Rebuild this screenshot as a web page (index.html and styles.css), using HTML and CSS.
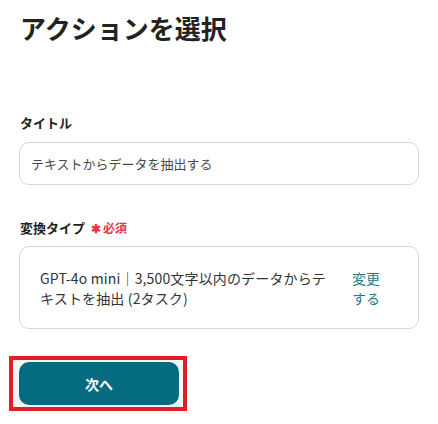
FILE: index.html
```html
<!DOCTYPE html>
<html lang="ja">
<head>
<meta charset="utf-8">
<link rel="stylesheet" href="styles.css">
</head>
<body>
<div class="page">
  <h1 class="title">アクションを選択</h1>
  <div class="field field-title">
    <div class="label">タイトル</div>
    <div class="input">テキストからデータを抽出する</div>
  </div>
  <div class="field field-type">
    <div class="label">変換タイプ<span class="req"><span class="star">✱</span>必須</span></div>
    <div class="select-box">
      <div class="select-text">GPT-4o mini｜3,500文字以内のデータからテキストを抽出 (2タスク)</div>
      <div class="change">変更する</div>
    </div>
  </div>
  <div class="actions">
    <div class="highlight">
      <button class="btn">次へ</button>
    </div>
  </div>
</div>
</body>
</html>
```

FILE: styles.css
```css
* { box-sizing: border-box; }
html, body { margin: 0; padding: 0; background: #ffffff; }
body {
  font-family: "Noto Sans CJK JP", "Noto Sans", sans-serif;
  color: #333333;
  width: 438px;
  height: 424px;
  overflow: hidden;
}
.page {
  padding: 8px 19px 0 19px;
}
.title {
  margin: 0 0 0 1px;
  font-size: 26px;
  line-height: 39px;
  font-weight: 700;
  color: #222222;
}
.field-title { margin-top: 67px; }
.label {
  font-size: 13px;
  font-weight: 700;
  line-height: 18px;
  color: #222222;
  padding-left: 1px;
  display: flex;
  align-items: center;
}
.input {
  margin-top: 10px;
  height: 43px;
  border: 1px solid #d3d7dd;
  border-radius: 10px;
  padding: 0 11px;
  display: flex;
  align-items: center;
  font-size: 13px;
  color: #4a4a4a;
}
.field-type { margin-top: 34px; }
.req {
  color: #e8334a;
  font-size: 12px;
  font-weight: 700;
  margin-left: 6px;
  display: inline-flex;
  align-items: center;
}
.star { font-size: 12px; margin-right: 2px; }
.select-box {
  margin-top: 9px;
  height: 83px;
  border: 1px solid #d3d7dd;
  border-radius: 10px;
  padding: 0 0 0 20px;
  display: flex;
  align-items: center;
  gap: 16px;
}
.select-text {
  flex: 0 0 296px;
  font-size: 14px;
  line-height: 20px;
  letter-spacing: 0.15px;
  color: #333333;
}
.change {
  font-size: 14px;
  line-height: 20px;
  color: #1f7a8c;
  width: 30px;
}
.actions {
  margin-top: 27px;
  margin-left: -10px;
}
.highlight {
  display: inline-block;
  border: 4px solid #e41e26;
  padding: 2px 4px 2px 6px;
  background: #f3f5f6;
}
.btn {
  display: block;
  width: 160px;
  height: 43px;
  border: none;
  border-radius: 10px;
  background: #056b80;
  color: #ffffff;
  font-family: "Noto Sans CJK JP", sans-serif;
  font-size: 14px;
  font-weight: 700;
}
```
